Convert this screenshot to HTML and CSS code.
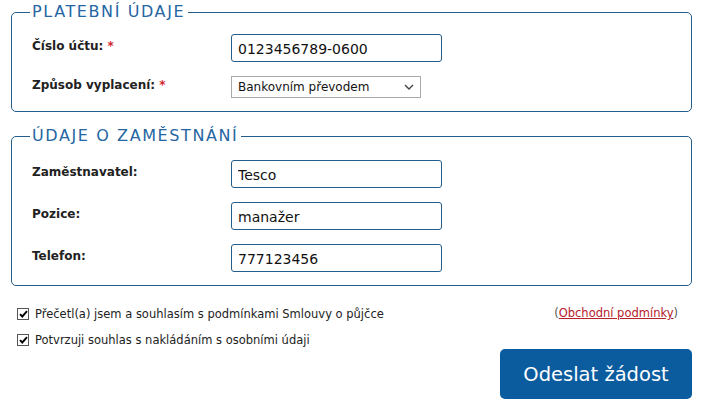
FILE: index.html
```html
<!DOCTYPE html>
<html lang="cs">
<head>
  <meta charset="UTF-8">
  <title>Žádost o půjčku</title>
  <link rel="stylesheet" href="styles.css">
</head>
<body>
  <form class="loan-form">
    <fieldset class="box box-pay">
      <legend>PLATEBNÍ ÚDAJE</legend>
      <div class="row">
        <label for="ucet">Číslo účtu: <span class="req">*</span></label>
        <input type="text" id="ucet" class="field" value="0123456789-0600">
      </div>
      <div class="row row-select">
        <label for="zpusob">Způsob vyplacení: <span class="req">*</span></label>
        <div class="select-wrap">
          <select id="zpusob" class="choice">
            <option selected>Bankovním převodem</option>
            <option>Poštovní poukázkou</option>
          </select>
          <svg class="chevron" width="10" height="6" viewBox="0 0 10 6"><path d="M1 1l4 4 4-4" fill="none" stroke="#444" stroke-width="1.4"/></svg>
        </div>
      </div>
    </fieldset>

    <fieldset class="box box-job">
      <legend>ÚDAJE O ZAMĚSTNÁNÍ</legend>
      <div class="row">
        <label for="zam">Zaměstnavatel:</label>
        <input type="text" id="zam" class="field" value="Tesco">
      </div>
      <div class="row">
        <label for="pozice">Pozice:</label>
        <input type="text" id="pozice" class="field" value="manažer">
      </div>
      <div class="row">
        <label for="tel">Telefon:</label>
        <input type="text" id="tel" class="field" value="777123456">
      </div>
    </fieldset>

    <div class="bottom">
      <div class="agree">
        <label class="check">
          <span class="tick"><svg width="9" height="8" viewBox="0 0 9 8"><path d="M1 4.2l2.3 2.3L8 1.2" fill="none" stroke="#000" stroke-width="1.9"/></svg></span>
          Přečetl(a) jsem a souhlasím s podmínkami Smlouvy o půjčce
        </label>
        <label class="check">
          <span class="tick"><svg width="9" height="8" viewBox="0 0 9 8"><path d="M1 4.2l2.3 2.3L8 1.2" fill="none" stroke="#000" stroke-width="1.9"/></svg></span>
          Potvrzuji souhlas s nakládáním s osobními údaji
        </label>
      </div>
      <div class="side">
        <div class="terms">(<a href="#">Obchodní podmínky</a>)</div>
        <button type="button" class="send">Odeslat žádost</button>
      </div>
    </div>
  </form>
</body>
</html>
```

FILE: styles.css
```css
body {
  margin: 0;
  background: #fff;
  font-family: "DejaVu Sans", Verdana, sans-serif;
  font-size: 12px;
  color: #222;
}

.loan-form {
  width: 681px;
  padding: 2px 0 0 11px;
}

.box {
  margin: 0;
  border: 1px solid #245d8a;
  border-radius: 5px;
}

.box-pay {
  margin-bottom: 14px;
  padding: 12px 18px 13px 18px;
}

.box-job {
  margin-bottom: 15px;
  padding: 14px 18px 13px 18px;
}

.box legend {
  padding: 0 3px 0 2px;
  font-size: 16px;
  letter-spacing: 1.6px;
  color: #2566a3;
  line-height: 20px;
}

.row {
  display: flex;
  align-items: flex-start;
  padding-left: 2px;
  margin-bottom: 14px;
}

.row:last-child {
  margin-bottom: 0;
}

.row label {
  width: 199px;
  padding-top: 5px;
  font-weight: bold;
  color: #222;
}

.row-select label {
  padding-top: 2px;
}

.req {
  color: #d22630;
}

.field {
  box-sizing: border-box;
  width: 211px;
  height: 28px;
  margin: 0;
  padding: 2px 6px 0;
  border: 1px solid #245d8a;
  border-radius: 3px;
  font-family: "DejaVu Sans", Verdana, sans-serif;
  font-size: 14px;
  color: #111;
}

.select-wrap {
  position: relative;
  width: 190px;
}

.choice {
  -webkit-appearance: none;
  appearance: none;
  box-sizing: border-box;
  width: 190px;
  height: 22px;
  margin: 0;
  padding: 0 0 0 6px;
  border: 1px solid #a9a9a9;
  border-radius: 0;
  background: #fff;
  font-family: "DejaVu Sans", Verdana, sans-serif;
  font-size: 12px;
  color: #111;
}

.chevron {
  position: absolute;
  right: 7px;
  top: 8px;
}

.bottom {
  display: flex;
  justify-content: space-between;
  padding-top: 4px;
}

.agree {
  display: flex;
  flex-direction: column;
  gap: 12px;
  padding: 2px 0 0 6px;
  font-size: 11.5px;
}

.check {
  display: flex;
  align-items: center;
  gap: 6px;
  color: #222;
}

.tick {
  box-sizing: border-box;
  width: 12px;
  height: 12px;
  border: 1px solid #555;
  display: flex;
  align-items: center;
  justify-content: center;
  background: #fff;
}

.side {
  display: flex;
  flex-direction: column;
  align-items: flex-end;
}

.terms {
  padding: 1px 14px 0 0;
  font-size: 11.5px;
  color: #555;
}

.terms a {
  color: #b5202c;
}

.send {
  margin-top: 29px;
  width: 192px;
  height: 50px;
  border: 0;
  border-radius: 5px;
  background: #0a5c9f;
  color: #fff;
  font-family: "DejaVu Sans", Verdana, sans-serif;
  font-size: 19.5px;
}
```
